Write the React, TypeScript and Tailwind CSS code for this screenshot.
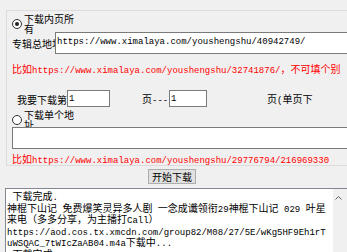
import React from 'react';

const CJK = /([\u2E80-\u9FFF\uFF00-\uFFEF\u3000-\u303F]+)/;

// splits a string into CJK and latin runs, each in its own font
function T({ s }: { s: string }) {
  return (
    <>
      {s
        .split(CJK)
        .filter(Boolean)
        .map((p, i) =>
          CJK.test(p) ? (
            <span key={i} className="font-['Noto_Sans_CJK_SC',sans-serif] text-[10px]">
              {p}
            </span>
          ) : (
            <span key={i} className="font-['Liberation_Mono',monospace] text-[9px]">
              {p}
            </span>
          )
        )}
    </>
  );
}

function Radio({ checked }: { checked?: boolean }) {
  return (
    <div className="mt-[5px] w-[10px] h-[10px] shrink-0 rounded-full border border-[#333] bg-white flex items-center justify-center">
      {checked && <div className="w-[4px] h-[4px] rounded-full bg-[#222]" />}
    </div>
  );
}

function Box({ className, text }: { className: string; text?: string }) {
  return (
    <div className={`relative shrink-0 bg-white border border-[#7a7a7a] pl-[1px] flex items-center whitespace-pre text-black ${className}`}>
      {text && <T s={text} />}
    </div>
  );
}

const logLines = [
  ' 下载完成.',
  '神棍下山记 免费爆笑灵异多人剧 一念成谶领衔29神棍下山记 029 叶星',
  '来电（多多分享，为主播打Call）',
  'https://aod.cos.tx.xmcdn.com/group82/M08/27/5E/wKg5HF9Eh1rT',
  'uWSQAC_7tWIcZaAB04.m4a下载中...',
  ' 下载完成.',
];

export default function App() {
  return (
    <div className="w-[347px] h-[252px] overflow-hidden bg-[#f0f0f0] text-black">
      {/* group box */}
      <div className="mt-[10px] ml-[6px] w-[400px] h-[156px] border border-[#dcdcdc]">
        {/* radio 1 */}
        <div className="mt-[3px] h-[18px] pl-[5px] flex">
          <Radio checked />
          <div className="ml-[2px] w-[50px] leading-[10px] font-['Noto_Sans_CJK_SC',sans-serif] text-[10px]">
            下载内页所有
          </div>
        </div>

        {/* album url */}
        <div className="h-[22px] pl-[5px] flex items-center">
          <div className="w-[43px] shrink-0 whitespace-nowrap leading-[12px]">
            <T s="专辑总地址" />
          </div>
          <Box className="h-[22px] w-[340px]" text="https://www.ximalaya.com/youshengshu/40942749/" />
        </div>

        <div className="mt-[7px] pl-[5px] leading-[12px] whitespace-nowrap text-[#f00]">
          <T s="比如https://www.ximalaya.com/youshengshu/32741876/，不可填个别" />
        </div>

        {/* page range */}
        <div className="mt-[13px] h-[17px] flex items-center leading-[12px] whitespace-nowrap">
          <div className="ml-[10px] w-[50px] shrink-0">
            <T s="我要下载第" />
          </div>
          <Box className="h-[17px] w-[43px]" text="1" />
          <div className="ml-[32px] w-[27px] shrink-0">
            <T s="页---" />
          </div>
          <Box className="h-[17px] w-[38px]" text="1" />
          <div className="ml-[60px] shrink-0">
            <T s="页(单页下" />
          </div>
        </div>

        {/* radio 2 */}
        <div className="mt-[3px] h-[17px] pl-[5px] flex">
          <Radio />
          <div className="ml-[2px] w-[50px] leading-[10px] font-['Noto_Sans_CJK_SC',sans-serif] text-[10px]">
            下载单个地址
          </div>
        </div>

        <div className="pl-[5px]">
          <Box className="h-[22px] w-[390px]" />
        </div>

        <div className="mt-[2px] pl-[5px] leading-[12px] whitespace-nowrap text-[#f00]">
          <T s="比如https://www.ximalaya.com/youshengshu/29776794/216969330" />
        </div>
      </div>

      {/* start button */}
      <div className="mt-[3px] ml-[148px] w-[48px] h-[15px] border border-[#adadad] bg-[#e1e1e1] flex items-center justify-center leading-[12px]">
        <T s="开始下载" />
      </div>

      {/* log */}
      <div className="mt-[4px] ml-[5px] w-[344px] h-[80px] border border-[#828790] bg-white flex">
        <div className="flex-1 pl-[1px] leading-[11.5px] whitespace-pre overflow-hidden">
          {logLines.map((l, i) => (
            <div key={i} className="h-[11.5px]">
              <T s={l} />
            </div>
          ))}
        </div>
        <div className="w-[15px] shrink-0 bg-[#f0f0f0] pt-[7px] pl-[2px]">
          <svg width="7" height="4" viewBox="0 0 7 4">
            <path d="M0.5 3.5 L3.5 0.5 L6.5 3.5" fill="none" stroke="#606060" strokeWidth="1" />
          </svg>
        </div>
      </div>
    </div>
  );
}
